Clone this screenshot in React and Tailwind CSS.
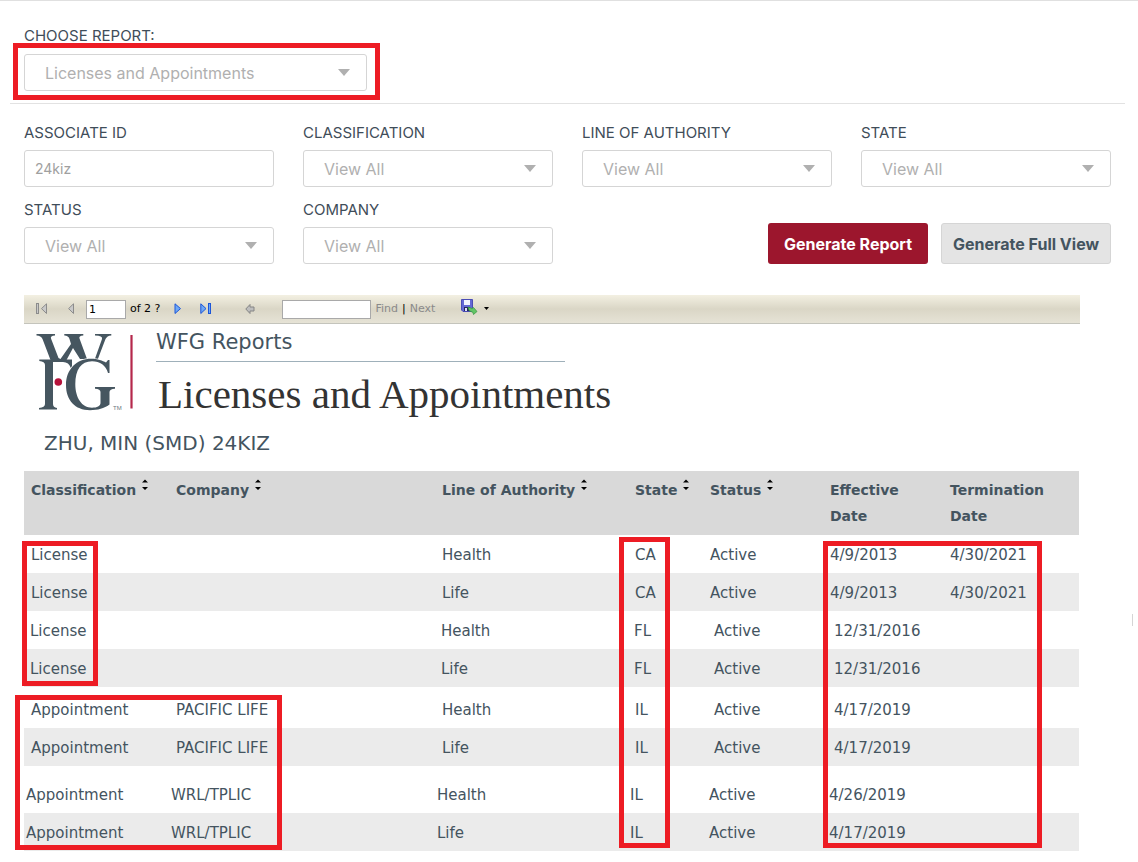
import React from "react";

const label = "block text-[15px] leading-5 text-[#3f4d59]";

function SelectField({ id, title, value, labelGap = "mb-[7px]" }) {
  return (
    <div>
      <label htmlFor={id} className={`${label} ${labelGap}`}>
        {title}
      </label>
      <div className="relative">
        <select
          id={id}
          defaultValue={value}
          className="block h-[37px] w-full appearance-none rounded-[3px] border border-[#d5d5d5] bg-white pl-5 pr-10 text-base text-[#b0b0b0]"
        >
          <option>{value}</option>
        </select>
        <svg
          viewBox="0 0 12 7"
          className="pointer-events-none absolute right-[17px] top-[15px] h-[7px] w-3 fill-[#b0b0b0]"
          aria-hidden="true"
        >
          <path d="M0 0H12L6 7Z" />
        </svg>
      </div>
    </div>
  );
}

function Highlight({ className }) {
  return (
    <div
      aria-hidden="true"
      className={`pointer-events-none absolute border-[5px] border-[#ed1c24] ${className}`}
    />
  );
}

function Logo() {
  return (
    <svg viewBox="0 0 100 80" className="h-20 w-[100px] shrink-0" aria-label="WFG" role="img">
      <g fill="#465660">
        <path d="M0.5 3H19V4.400Q14 4.600 15 7.500L22.500 27L24.500 28L35 13L33.500 8Q32.500 4.600 28.300 4.400V3H47.300V4.400Q42.500 4.600 43.500 7.500L51 28H44L37 17L30.500 29H14.500L6.500 8Q5 4.600 0.500 4.400Z" />
        <path d="M59 3H75.300V4.400Q71 4.800 69.500 8L61.500 29H58.500L66 8Q67 4.600 59 4.400Z" />
        <path d="M3.300 28.500H36V37H34.800Q33 31 27 31H17V73Q17 76.500 21 77V78.500H3V77Q9 76.500 9 73V34Q9 30.500 3.300 30Z" />
        <path
          d="M73.500 29V42H72C70 34.500 64 30.300 56 30.300C45 30.300 39.300 39 39.300 53C39.300 67 46 76.700 56 76.700C61 76.700 64.500 75 64.500 72V61Q64.500 58.200 59 57.800V56H79V57.800Q73.500 58.200 73.500 61V73.500C68 77.500 62 79.200 54 79.200C39 79.200 30 69 30 54C30 38 41 27.800 55 27.800C62 27.800 66.500 30 70 31.500L72 29Z"
          stroke="#fff"
          strokeWidth="1.6"
          paintOrder="stroke"
        />
      </g>
      <text x="77" y="79" fontSize="6" fontFamily="'Liberation Sans', sans-serif" fill="#6b7780">TM</text>
      <circle cx="22.300" cy="51" r="3.800" fill="#b5123b" />
      <path d="M95.500 4V77.500" stroke="#b5284c" strokeWidth="2.200" />
    </svg>
  );
}

function Toolbar() {
  return (
    <div className="mr-[58px] ml-6 flex h-[29px] items-center border-b border-[#c4c4bc] bg-linear-to-b from-[#f3f0e2] via-[#dad6c6] to-[#e6e3d6] pl-3 font-['DejaVu_Sans',sans-serif] text-[11px] text-black">
      <button type="button" aria-label="First page" className="mr-5">
        <svg viewBox="0 0 12 12" className="h-3 w-3" fill="#c9c9c9" stroke="#8c8c8c">
          <rect x="0.5" y="0.5" width="2" height="10" />
          <path d="M10.500 0.8V10.500L5.500 5.600Z" />
        </svg>
      </button>
      <button type="button" aria-label="Previous page" className="mr-[10px]">
        <svg viewBox="0 0 8 12" className="h-3 w-2" fill="#c9c9c9" stroke="#8c8c8c">
          <path d="M5.500 0.8V10.500L0.6 5.600Z" />
        </svg>
      </button>
      <input
        aria-label="Current page"
        defaultValue="1"
        className="h-[19px] w-10 border border-[#a9a9a9] bg-white pl-0.5 text-[11px]"
      />
      <span className="ml-1 mr-3.5">of 2 ?</span>
      <button type="button" aria-label="Next page" className="mr-[18px]">
        <svg viewBox="0 0 8 12" className="h-3 w-2" fill="#6fa8f5" stroke="#1d56d8">
          <path d="M1 0.8V10.500L6.500 5.600Z" />
        </svg>
      </button>
      <button type="button" aria-label="Last page" className="mr-[33px]">
        <svg viewBox="0 0 12 12" className="h-3 w-3" fill="#6fa8f5" stroke="#1d56d8">
          <path d="M0.8 0.8V10.500L6 5.600Z" />
          <rect x="8.500" y="0.5" width="2" height="10" />
        </svg>
      </button>
      <button type="button" aria-label="Back" className="mr-[27px]">
        <svg viewBox="0 0 10 12" className="h-3 w-[10px]" fill="#bdbdbd" stroke="#858585">
          <path d="M0.8 6L5 1.500V4H9V8H5V10.500Z" />
        </svg>
      </button>
      <input aria-label="Search text" className="h-[19px] w-[89px] border border-[#a9a9a9] bg-white px-1" />
      <button type="button" className="ml-1 text-[#8a8a8a]">Find</button>
      <span className="mx-1">|</span>
      <button type="button" className="text-[#8a8a8a]">Next</button>
      <button type="button" aria-label="Export" className="ml-[26px] flex items-center gap-1.5">
        <svg viewBox="0 0 17 16" className="mb-1 h-4 w-[17px]">
          <path d="M0.500 0.500H11.500V12.500H2L0.500 11Z" fill="#6468d4" stroke="#4a4cb5" />
          <rect x="3" y="1" width="6" height="5" fill="#f1f3ff" />
          <rect x="3" y="8" width="6" height="4" fill="#25255c" />
          <rect x="4" y="9" width="2" height="3" fill="#dfe1fa" />
          <path d="M7 8L11 9.500L12.500 8.500L16 12.500L12.500 15.500L12 13.500L8 11.500Z" fill="#62c565" stroke="#32953e" strokeWidth="0.7" />
        </svg>
        <svg viewBox="0 0 5 3" className="mb-0.5 h-[3px] w-[5px]">
          <path d="M0 0H5L2.500 3Z" />
        </svg>
      </button>
    </div>
  );
}

const columns = [
  { title: "Classification", sortable: true, width: "w-[145px]" },
  { title: "Company", sortable: true, width: "w-[266px]" },
  { title: "Line of Authority", sortable: true, width: "w-[193px]" },
  { title: "State", sortable: true, width: "w-[75px]" },
  { title: "Status", sortable: true, width: "w-[120px]" },
  { title: "Effective Date", width: "w-[120px]" },
  { title: "Termination Date", width: "w-auto" },
];

const groups = [
  {
    pad: "pl-[7px]",
    latePad: "pl-[7px]",
    firstHeight: "h-[38px]",
    rows: [
      ["License", "", "Health", "CA", "Active", "4/9/2013", "4/30/2021"],
      ["License", "", "Life", "CA", "Active", "4/9/2013", "4/30/2021"],
    ],
  },
  {
    pad: "pl-1.5",
    latePad: "pl-[11px]",
    firstHeight: "h-[38px]",
    rows: [
      ["License", "", "Health", "FL", "Active", "12/31/2016", ""],
      ["License", "", "Life", "FL", "Active", "12/31/2016", ""],
    ],
  },
  {
    pad: "pl-[7px]",
    latePad: "pl-[11px]",
    firstHeight: "h-[41px]",
    rows: [
      ["Appointment", "PACIFIC LIFE", "Health", "IL", "Active", "4/17/2019", ""],
      ["Appointment", "PACIFIC LIFE", "Life", "IL", "Active", "4/17/2019", ""],
    ],
  },
  {
    pad: "pl-0.5",
    latePad: "pl-1.5",
    firstHeight: "h-[47px]",
    rows: [
      ["Appointment", "WRL/TPLIC", "Health", "IL", "Active", "4/26/2019", ""],
      ["Appointment", "WRL/TPLIC", "Life", "IL", "Active", "4/17/2019", ""],
    ],
  },
];

function SortIcon() {
  return (
    <svg viewBox="0 0 6 12" className="mt-0.5 h-3 w-1.5" aria-hidden="true">
      <path d="M0 3.500H6L3 0.500ZM0 8H6L3 11Z" />
    </svg>
  );
}

function ReportTable() {
  return (
    <table className="w-full table-fixed border-collapse text-left text-[15px] text-[#44545f]">
      <thead>
        <tr className="bg-[#d9d9d9]">
          {columns.map((c) => (
            <th key={c.title} scope="col" className={`py-1.5 pl-[7px] align-top text-sm font-bold leading-[26px] ${c.width}`}>
              {c.sortable ? (
                <button type="button" className="flex items-start gap-1.5 whitespace-nowrap">
                  {c.title}
                  <SortIcon />
                </button>
              ) : (
                c.title.split(" ").map((word) => (
                  <span key={word} className="block leading-[26px]">{word}</span>
                ))
              )}
            </th>
          ))}
        </tr>
      </thead>
      {groups.map((g, gi) => (
        <tbody key={gi}>
          {g.rows.map((row, ri) => (
            <tr key={ri} className={ri === 0 ? g.firstHeight : "h-[38px] bg-[#ebebeb]"}>
              {row.map((cell, ci) => (
                <td
                  key={ci}
                  className={`whitespace-nowrap pb-2 align-bottom leading-5 ${ci === 4 || ci === 5 ? g.latePad : g.pad}`}
                >
                  {cell}
                </td>
              ))}
            </tr>
          ))}
        </tbody>
      ))}
    </table>
  );
}

export default function App() {
  return (
    <main className="relative border-t border-[#e0e0e0] bg-white pb-[11px] font-[Inter,sans-serif]">
      <section className="relative ml-[10px] mr-[13px] border-b border-[#e2e2e2] pb-3 pl-[14px] pt-[25px]">
        <div className="w-[343px]">
          <SelectField id="report" title="CHOOSE REPORT:" value="Licenses and Appointments" labelGap="mb-2" />
        </div>
        <Highlight className="left-[3px] top-[42px] h-[57px] w-[367px]" />
      </section>

      <form
        className="grid grid-cols-4 gap-x-[29px] gap-y-[13px] pb-[31px] pl-6 pr-[27px] pt-[19px]"
        onSubmit={(e) => e.preventDefault()}
      >
        <div>
          <label htmlFor="associate" className={`${label} mb-[7px]`}>ASSOCIATE ID</label>
          <input
            id="associate"
            defaultValue="24kiz"
            className="block h-[37px] w-full rounded-[3px] border border-[#d5d5d5] bg-white px-[10px] text-sm text-[#a0a0a0]"
          />
        </div>
        <SelectField id="classification" title="CLASSIFICATION" value="View All" />
        <SelectField id="authority" title="LINE OF AUTHORITY" value="View All" />
        <SelectField id="state" title="STATE" value="View All" />
        <SelectField id="status" title="STATUS" value="View All" />
        <SelectField id="company" title="COMPANY" value="View All" />
        <div className="col-span-2 flex items-end justify-end gap-[13px] text-base font-bold">
          <button type="submit" className="h-[41px] w-40 rounded-[3px] bg-[#9c162d] text-white">
            Generate Report
          </button>
          <button type="button" className="h-[41px] w-[170px] rounded-[3px] border border-[#d5d5d5] bg-[#e4e4e4] text-[#44545f]">
            Generate Full View
          </button>
        </div>
      </form>

      <Toolbar />

      <section className="ml-6 mr-[59px] font-['DejaVu_Sans',sans-serif]">
        <header className="flex gap-5 pl-3 pt-[7px]">
          <Logo />
          <div className="text-[#44545f]">
            <p className="w-[409px] border-b border-[#9fb0ba] pb-2 text-[21px] leading-[22px]">WFG Reports</p>
            <h1 className="mt-2 whitespace-nowrap pl-0.5 font-['Liberation_Serif',serif] text-[41px] leading-[48px] text-[#333]">
              Licenses and Appointments
            </h1>
          </div>
        </header>
        <h2 className="pb-[14px] pl-5 pt-[11px] text-xl leading-7 text-[#44545f]">ZHU, MIN (SMD) 24KIZ</h2>
        <div className="relative">
          <ReportTable />
          <Highlight className="-left-0.5 top-[70px] h-[145px] w-[76px]" />
          <Highlight className="-left-[9px] top-[224px] h-[155px] w-[267px]" />
          <Highlight className="left-[595px] top-[66px] h-[311px] w-[51px]" />
          <Highlight className="left-[799px] top-[70px] h-[307px] w-[219px]" />
        </div>
      </section>
      <div aria-hidden="true" className="absolute right-[5px] top-[613px] h-3 w-px bg-[#d5d5d5]" />
    </main>
  );
}
